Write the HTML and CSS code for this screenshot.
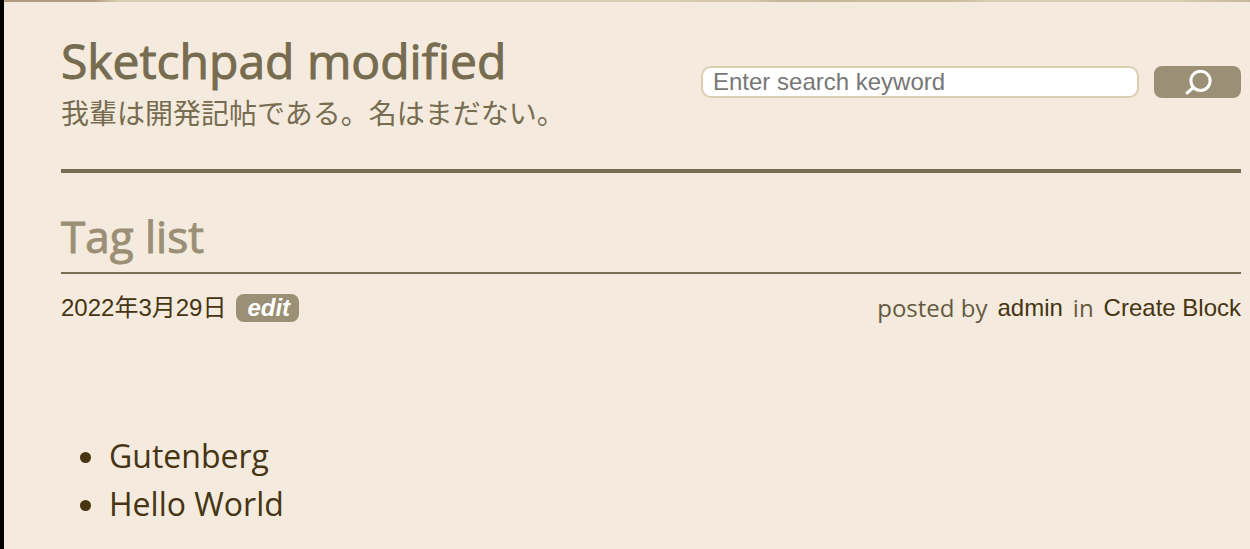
FILE: index.html
```html
<!DOCTYPE html>
<html lang="ja">
<head>
<meta charset="utf-8">
<meta name="viewport" content="width=device-width, initial-scale=1">
<title>Tag list</title>
<link rel="stylesheet" href="styles.css">
</head>
<body>
<div class="page">
  <div class="banner"></div>
  <div class="content">
    <header class="site-header">
      <div class="branding">
        <h1 class="site-title">Sketchpad modified</h1>
        <p class="tagline">我輩は開発記帖である。名はまだない。</p>
      </div>
      <form class="search" role="search">
        <input class="search-input" type="search" placeholder="Enter search keyword" aria-label="Search">
        <button class="search-button" type="button" aria-label="Search">
          <svg class="search-icon" viewBox="0 0 28 28" aria-hidden="true"><circle cx="16.500" cy="12.800" r="9.600"/><path d="M9.500 19.500L3 25"/></svg>
        </button>
      </form>
    </header>
    <main>
      <h2 class="entry-title">Tag list</h2>
      <div class="entry-meta">
        <div class="meta-group">
          <a class="meta-link" href="#">2022年3月29日</a>
          <a class="edit-link" href="#">edit</a>
        </div>
        <div class="meta-group">
          <span>posted by</span>
          <a class="meta-link" href="#">admin</a>
          <span>in</span>
          <a class="meta-link" href="#">Create Block</a>
        </div>
      </div>
      <ul class="tag-list">
        <li><a href="#">Gutenberg</a></li>
        <li><a href="#">Hello World</a></li>
      </ul>
    </main>
  </div>
</div>
</body>
</html>
```
FILE: styles.css
```css
* { box-sizing: border-box; }
body {
  margin: 0;
  background: #f4ebde;
  color: #665a3f;
  font-family: "Open Sans", "Noto Sans CJK JP", sans-serif;
}
a { color: #463412; text-decoration: none; }
.page { min-height: 100vh; border-left: 4px solid #000; }
.banner {
  height: 2px;
  background: linear-gradient(90deg, #b29d82 0, #b29d82 90px, #d8cdb0 115px, #d8cdb0 50%, #d6c9a9 60%, #c5b797 62%, #c9bb9a 76%, #d8cdb0 79%, #d8cdb0 94%, #c5b797 100%);
}
.content { padding: 31px 9px 24px 57px; }
.site-header {
  display: flex;
  justify-content: space-between;
  align-items: flex-start;
  padding-bottom: 36px;
  border-bottom: 4px solid #776b50;
  color: #776b50;
}
.site-title {
  margin: 0;
  font-size: 48px;
  font-weight: 400;
  line-height: 56px;
  -webkit-text-stroke: 1px currentColor;
}
.tagline { margin: 4px 0 0; font-size: 28px; line-height: 40px; }
.search { display: flex; gap: 15px; padding-top: 33px; }
.search-input {
  width: 438px;
  height: 32px;
  padding: 0 10px;
  border: 2px solid #dbcfb3;
  border-radius: 10px;
  background: #fff;
  font: 24px "Liberation Sans", sans-serif;
}
.search-input::placeholder { color: #777; }
.search-button {
  display: flex;
  justify-content: center;
  align-items: center;
  width: 87px;
  height: 32px;
  padding: 0;
  border: 0;
  border-radius: 8px;
  background: #9b8f75;
}
.search-icon {
  width: 28px;
  height: 28px;
  fill: none;
  stroke: #fff;
  stroke-width: 3;
  stroke-linecap: round;
}
.entry-title {
  margin: 32px 0 0;
  padding: 3px 0 8px;
  border-bottom: 2px solid #776b50;
  color: #9b8f75;
  font-size: 44px;
  font-weight: 400;
  line-height: 56px;
  -webkit-text-stroke: 1px currentColor;
}
.entry-meta {
  display: flex;
  justify-content: space-between;
  padding-top: 16px;
  font-size: 24px;
  line-height: 36px;
}
.meta-group { display: flex; align-items: center; gap: 10px; }
.meta-link { font-family: "Liberation Sans", "Noto Sans CJK JP", sans-serif; }
.edit-link {
  padding: 0 9px 0 11px;
  border-radius: 8px;
  background: #9b8f75;
  color: #fff;
  font: italic bold 24px/28px "Liberation Sans", sans-serif;
}
.tag-list {
  margin: 106px 0 0;
  padding-left: 48px;
  color: #463412;
  font-size: 32px;
  line-height: 48px;
}
```
